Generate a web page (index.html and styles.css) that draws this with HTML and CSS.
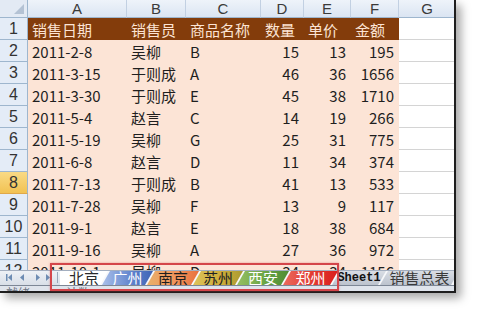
FILE: index.html
```html
<!DOCTYPE html>
<html lang="zh-CN">
<head>
<meta charset="utf-8">
<title>销售表</title>
<link rel="stylesheet" href="styles.css">
</head>
<body>
<div class="window">
  <div class="sheet">
    <div class="corner"></div>
    <div class="ch">A</div><div class="ch">B</div><div class="ch">C</div><div class="ch">D</div><div class="ch">E</div><div class="ch">F</div><div class="ch">G</div>

    <div class="rh">1</div>
    <div class="c h">销售日期</div><div class="c h">销售员</div><div class="c h">商品名称</div><div class="c h">数量</div><div class="c h">单价</div><div class="c h">金额</div><div class="c g"></div>

    <div class="rh">2</div>
    <div class="c p">2011-2-8</div><div class="c p">吴柳</div><div class="c p">B</div><div class="c p n">15</div><div class="c p n">13</div><div class="c p n">195</div><div class="c g"></div>

    <div class="rh">3</div>
    <div class="c p">2011-3-15</div><div class="c p">于则成</div><div class="c p">A</div><div class="c p n">46</div><div class="c p n">36</div><div class="c p n">1656</div><div class="c g"></div>

    <div class="rh">4</div>
    <div class="c p">2011-3-30</div><div class="c p">于则成</div><div class="c p">E</div><div class="c p n">45</div><div class="c p n">38</div><div class="c p n">1710</div><div class="c g"></div>

    <div class="rh">5</div>
    <div class="c p">2011-5-4</div><div class="c p">赵言</div><div class="c p">C</div><div class="c p n">14</div><div class="c p n">19</div><div class="c p n">266</div><div class="c g"></div>

    <div class="rh">6</div>
    <div class="c p">2011-5-19</div><div class="c p">吴柳</div><div class="c p">G</div><div class="c p n">25</div><div class="c p n">31</div><div class="c p n">775</div><div class="c g"></div>

    <div class="rh">7</div>
    <div class="c p">2011-6-8</div><div class="c p">赵言</div><div class="c p">D</div><div class="c p n">11</div><div class="c p n">34</div><div class="c p n">374</div><div class="c g"></div>

    <div class="rh sel">8</div>
    <div class="c p">2011-7-13</div><div class="c p">于则成</div><div class="c p">B</div><div class="c p n">41</div><div class="c p n">13</div><div class="c p n">533</div><div class="c g"></div>

    <div class="rh">9</div>
    <div class="c p">2011-7-28</div><div class="c p">吴柳</div><div class="c p">F</div><div class="c p n">13</div><div class="c p n">9</div><div class="c p n">117</div><div class="c g"></div>

    <div class="rh">10</div>
    <div class="c p">2011-9-1</div><div class="c p">赵言</div><div class="c p">E</div><div class="c p n">18</div><div class="c p n">38</div><div class="c p n">684</div><div class="c g"></div>

    <div class="rh">11</div>
    <div class="c p">2011-9-16</div><div class="c p">吴柳</div><div class="c p">A</div><div class="c p n">27</div><div class="c p n">36</div><div class="c p n">972</div><div class="c g"></div>

    <div class="rh">12</div>
    <div class="c p">2011-10-1</div><div class="c p">吴柳</div><div class="c p">D</div><div class="c p n">34</div><div class="c p n">34</div><div class="c p n">1156</div><div class="c g"></div>
  </div>

  <div class="tabbar">
    <div class="nav">
      <svg width="60" height="15" viewBox="0 0 60 15">
        <rect x="6" y="4" width="1.5" height="7" fill="#6d8cb3"/>
        <polygon points="8,7.5 12,4 12,11" fill="#6d8cb3"/>
        <polygon points="20,7.5 24,4 24,11" fill="#6d8cb3"/>
        <polygon points="40,7.5 36,4 36,11" fill="#6d8cb3"/>
        <polygon points="50,7.5 46,4 46,11" fill="#6d8cb3"/>
        <rect x="50.5" y="4" width="1.5" height="7" fill="#6d8cb3"/>
        <rect x="57" y="2" width="1" height="11" fill="#9aa6b8"/>
      </svg>
    </div>
    <div class="tabs">
      <div class="tab t-bj">北京</div>
      <div class="tab t-gz">广州</div>
      <div class="tab t-nj">南京</div>
      <div class="tab t-sz">苏州</div>
      <div class="tab t-xa">西安</div>
      <div class="tab t-zz">郑州</div>
      <div class="tab t-s1">Sheet1</div>
      <div class="tab t-zb">销售总表</div>
    </div>
  </div>
  <div class="status"><span>就绪</span><span class="s2">计数</span></div>
</div>
<div class="mark"></div>
</body>
</html>
```

FILE: styles.css
```css
* { box-sizing: border-box; }

body {
  margin: 0;
  background: #ffffff;
  font-family: "Noto Sans CJK SC", "Noto Sans", sans-serif;
  width: 478px;
  height: 315px;
  overflow: hidden;
  position: relative;
}

.window {
  width: 456px;
  height: 293px;
  border-right: 2px solid #1e1e1e;
  border-bottom: 2px solid #1e1e1e;
  box-shadow: 5px 5px 9px rgba(0, 0, 0, 0.35);
  display: flex;
  flex-direction: column;
  overflow: hidden;
  background: #fff;
}

.sheet {
  height: 270px;
  flex: none;
  overflow: hidden;
  display: grid;
  grid-template-columns: 28px 99px 59px 75px 43px 47px 48px 57px;
  grid-template-rows: 18px;
  grid-auto-rows: 22px;
}

.corner {
  background: #e3eaf4;
  border-right: 1px solid #9eb6ce;
  border-bottom: 1px solid #9eb6ce;
  position: relative;
}
.corner::after {
  content: "";
  position: absolute;
  right: 3px;
  bottom: 3px;
  width: 10px;
  height: 10px;
  background: #b4c2d4;
  clip-path: polygon(100% 0, 100% 100%, 0 100%);
}

.ch {
  background: linear-gradient(#eef3fa, #dbe5f2);
  border-right: 1px solid #c2d0e2;
  border-bottom: 1px solid #9eb6ce;
  color: #3a3a3a;
  font-family: "Liberation Sans", "Noto Sans", sans-serif;
  font-size: 15px;
  line-height: 17px;
  text-align: center;
}

.rh {
  background: #e4ecf7;
  border-right: 1px solid #9eb6ce;
  border-bottom: 1px solid #9eb6ce;
  color: #333;
  font-family: "Liberation Sans", "Noto Sans", sans-serif;
  font-size: 16px;
  display: flex;
  align-items: center;
  justify-content: center;
}
.rh.sel {
  background: linear-gradient(#f9da85, #f2c253);
  border-bottom-color: #e0a84a;
}

.c {
  font-size: 15px;
  color: #1f1f1f;
  display: flex;
  align-items: center;
  padding-left: 4px;
  white-space: nowrap;
  overflow: hidden;
}
.c.h {
  background: #833c0b;
  color: #fce4d4;
}
.c.p {
  background: #fce4d6;
}
.c.n {
  justify-content: flex-end;
  padding-left: 0;
  padding-right: 5px;
}
.c.g {
  background: #fff;
  border-bottom: 1px solid #d4d4d4;
}

.tabbar {
  height: 15px;
  flex: none;
  display: flex;
  background: #e9edf3;
  border-top: 1px solid #a3aebf;
}

.nav {
  width: 60px;
  flex: none;
  background: linear-gradient(#eef1f6, #d9dfe8);
}
.nav svg { display: block; margin-top: -1px; }

.tabs {
  display: flex;
  background: #f7f8fa;
  flex: 1;
}

.tab {
  height: 14px;
  flex: none;
  display: flex;
  align-items: center;
  justify-content: center;
  font-size: 15px;
  line-height: 14px;
  margin-left: -6px;
  clip-path: polygon(8px 0, 100% 0, calc(100% - 8px) 100%, 0 100%);
  white-space: nowrap;
}

.t-bj {
  width: 48px;
  margin-left: 0;
  background: #ffffff;
  color: #2a2a2a;
  clip-path: polygon(0 0, 100% 0, calc(100% - 8px) 100%, 0 100%);
}
.t-gz {
  width: 51px;
  background: linear-gradient(90deg, #a9bfe9, #5f82cc 60%, #3e63b5);
  color: #ffffff;
}
.t-nj {
  width: 52px;
  background: linear-gradient(90deg, #e9b06b, #f0945c 55%, #e8703e);
  color: #1e1e1e;
}
.t-sz {
  width: 50px;
  background: linear-gradient(90deg, #dcc25a, #cfae3a 55%, #a99a32);
  color: #222;
}
.t-xa {
  width: 52px;
  background: linear-gradient(90deg, #95bf63, #6aa444 55%, #4f8c34);
  color: #ffffff;
}
.t-zz {
  width: 55px;
  background: linear-gradient(90deg, #ea6a5e, #e23a30 55%, #d91e1e);
  color: #ffffff;
}
.t-s1 {
  width: 54px;
  background: linear-gradient(#d9dde4, #bcc3ce);
  color: #111;
  font-family: "Liberation Mono", monospace;
  font-size: 12px;
  font-weight: bold;
}
.t-zb {
  width: 79px;
  background: linear-gradient(#d9dde4, #bcc3ce);
  color: #3a3a3a;
}

.status {
  height: 6px;
  flex: none;
  background: #dfe4ec;
  border-top: 1px solid #7d8796;
  overflow: hidden;
  font-size: 12px;
  line-height: 14px;
  color: #6b7380;
  padding-left: 6px;
}
.status .s2 { margin-left: 36px; }

.mark {
  position: absolute;
  left: 50px;
  top: 263px;
  width: 289px;
  height: 28px;
  border: 2px solid #d4454a;
  box-shadow: 0 0 2px rgba(212, 69, 74, 0.5);
}
```
